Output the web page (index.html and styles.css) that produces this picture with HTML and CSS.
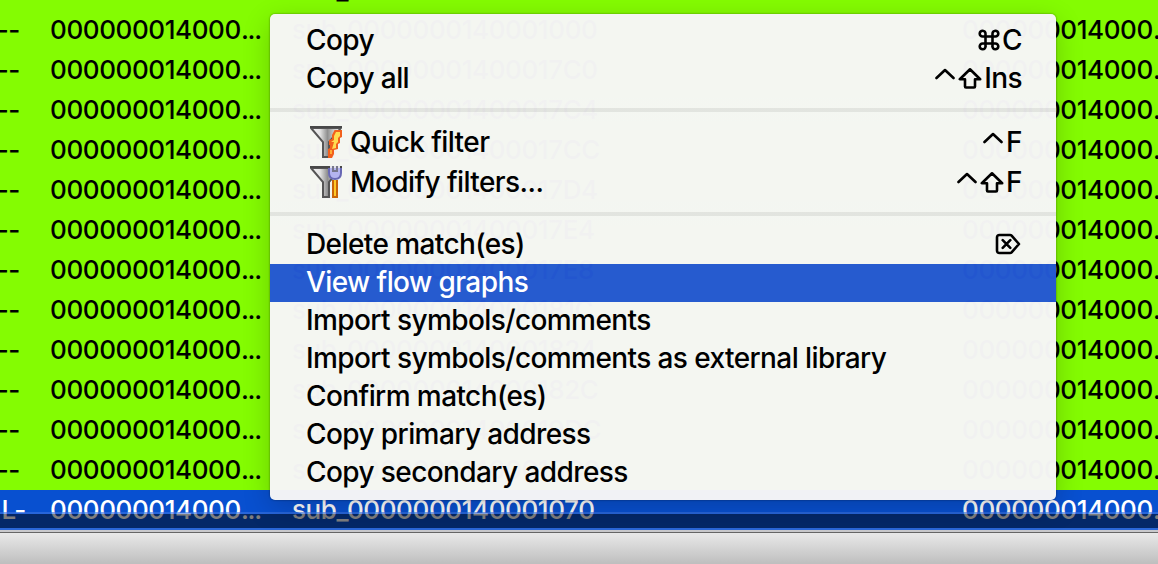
FILE: index.html
```html
<!DOCTYPE html>
<html lang="en">
<head>
<meta charset="utf-8">
<title>Matched functions</title>
<link rel="stylesheet" href="styles.css">
</head>
<body>
<svg class="defs" aria-hidden="true">
  <symbol id="ctrl" viewBox="0 0 20 22"><path d="M1.500 11 10 3l8.500 8"/></symbol>
  <symbol id="shift" viewBox="0 0 24 22"><path d="M12 2.300 1.800 12.200H7V19.500q0 1 1 1h8q1 0 1-1V12.200h5.200z"/></symbol>
  <symbol id="cmd" viewBox="0 0 22 22"><path d="M7.500 7.500h7v7h-7zM7.500 7.500V4.800A2.900 2.900 0 1 0 4.600 7.500zM14.500 7.500V4.800a2.900 2.900 0 1 1 2.900 2.700zM7.500 14.500v2.700a2.900 2.900 0 1 1-2.900-2.700zM14.500 14.500v2.700a2.900 2.900 0 1 0 2.900-2.700z"/></symbol>
  <symbol id="del" viewBox="0 0 26 22"><path d="M4.500 2H15q1 0 1.600.700L24 11l-7.400 8.300q-.600.700-1.600.700H4.500Q2 20 2 17.500v-13Q2 2 4.500 2zM7.700 7.200l7.600 7.600M15.300 7.200l-7.600 7.600"/></symbol>
  <linearGradient id="metal"><stop offset="0" stop-color="#f4f4f4"/><stop offset=".3" stop-color="#e4e4e4"/><stop offset=".55" stop-color="#909090"/><stop offset=".75" stop-color="#c8c8c8"/><stop offset="1" stop-color="#f0f0f0"/></linearGradient>
  <symbol id="funnel" viewBox="0 0 16 16"><path fill="url(#metal)" stroke="#555" d="M.500 1 6.500 8V15.500H9.500V8L15.500 1z"/><path fill="#484848" d="M0 0h16v1H0z"/></symbol>
</svg>
<main class="window">
  <div class="table">
    <div class="row"><span class="flags">--</span><span>000000014000<i>...</i></span><span>sub_0000000140001010</span><span>000000014000<i>...</i></span></div>
    <div class="row"><span class="flags">--</span><span>000000014000<i>...</i></span><span>sub_0000000140001000</span><span>000000014000<i>...</i></span></div>
    <div class="row"><span class="flags">--</span><span>000000014000<i>...</i></span><span>sub_00000001400017C0</span><span>000000014000<i>...</i></span></div>
    <div class="row"><span class="flags">--</span><span>000000014000<i>...</i></span><span>sub_00000001400017C4</span><span>000000014000<i>...</i></span></div>
    <div class="row"><span class="flags">--</span><span>000000014000<i>...</i></span><span>sub_00000001400017CC</span><span>000000014000<i>...</i></span></div>
    <div class="row"><span class="flags">--</span><span>000000014000<i>...</i></span><span>sub_00000001400017D4</span><span>000000014000<i>...</i></span></div>
    <div class="row"><span class="flags">--</span><span>000000014000<i>...</i></span><span>sub_00000001400017E4</span><span>000000014000<i>...</i></span></div>
    <div class="row"><span class="flags">--</span><span>000000014000<i>...</i></span><span>sub_00000001400017E8</span><span>000000014000<i>...</i></span></div>
    <div class="row"><span class="flags">--</span><span>000000014000<i>...</i></span><span>sub_000000014000181C</span><span>000000014000<i>...</i></span></div>
    <div class="row"><span class="flags">--</span><span>000000014000<i>...</i></span><span>sub_0000000140001824</span><span>000000014000<i>...</i></span></div>
    <div class="row"><span class="flags">--</span><span>000000014000<i>...</i></span><span>sub_000000014000182C</span><span>000000014000<i>...</i></span></div>
    <div class="row"><span class="flags">--</span><span>000000014000<i>...</i></span><span>sub_00000001400019DC</span><span>000000014000<i>...</i></span></div>
    <div class="row"><span class="flags">--</span><span>000000014000<i>...</i></span><span>sub_0000000140001BC0</span><span>000000014000<i>...</i></span></div>
    <div class="row selected"><span class="flags last">L-</span><span>000000014000<i>...</i></span><span>sub_0000000140001070</span><span>000000014000<i>...</i></span></div>
  </div>
  <div class="scrollbar"></div>
  <footer class="status"></footer>

  <nav class="menu">
    <div class="item"><span class="label">Copy</span><span class="keys"><svg class="cmd"><use href="#cmd"/></svg>C</span></div>
    <div class="item"><span class="label">Copy all</span><span class="keys"><svg class="ctrl"><use href="#ctrl"/></svg><svg class="shift"><use href="#shift"/></svg>Ins</span></div>
    <div class="sep"></div>
    <div class="item tall"><svg class="icon" viewBox="0 0 16 16"><use href="#funnel"/><path d="M12.300 2H16v3.500L15 6v2.500l-1 .500v2.500l-2 .500v2l-1 2H9v-4.500l1-.500V9.500H9.500V7l1.500-.500V4.500z" fill="#f2601c"/><path d="M13 3h2v2l-1 1v2l-1 1v2l-2 .500 1-3.500h-1.500L12 7V5z" fill="#ffdc50"/><path d="M10 12h1v2h-1z" fill="#ffac35"/></svg><span class="label">Quick filter</span><span class="keys"><svg class="ctrl"><use href="#ctrl"/></svg>F</span></div>
    <div class="item tall"><svg class="icon" viewBox="0 0 16 16"><use href="#funnel"/><path d="M10 0h5v3h-5z" fill="#e4e4ea"/><path d="M9.500 1v2.500Q9.500 6.500 12.500 6.500T15.500 3.500V1" fill="#b4b4f0" stroke="#6868b4"/><path d="M11 0h1v2h1V0h1v3h-3z" fill="#77778c"/><path d="M11 7h3v9h-3z" fill="#c96508"/><path d="M12 7h1v8h-1z" fill="#ffc928"/></svg><span class="label">Modify filters...</span><span class="keys"><svg class="ctrl"><use href="#ctrl"/></svg><svg class="shift"><use href="#shift"/></svg>F</span></div>
    <div class="sep"></div>
    <div class="item"><span class="label">Delete match(es)</span><span class="keys"><svg class="del"><use href="#del"/></svg></span></div>
    <div class="item active"><span class="label">View flow graphs</span></div>
    <div class="item"><span class="label">Import symbols/comments</span></div>
    <div class="item"><span class="label">Import symbols/comments as external library</span></div>
    <div class="item"><span class="label">Confirm match(es)</span></div>
    <div class="item"><span class="label">Copy primary address</span></div>
    <div class="item"><span class="label">Copy secondary address</span></div>
  </nav>
</main>
</body>
</html>
```
FILE: styles.css
```css
* { box-sizing: border-box; }
body { margin: 0; overflow: hidden; font-family: Inter, "Liberation Sans", sans-serif; color: #000; }
.defs { position: absolute; width: 0; height: 0; }
.window { position: relative; width: 1158px; height: 564px; overflow: hidden; display: flex; flex-direction: column; }
.table { height: 530px; display: flex; flex-direction: column; justify-content: flex-end; overflow: hidden; flex: none; }
.row {
  display: grid; grid-template-columns: 50px 242px 670px 220px; flex: none;
  height: 40px; line-height: 40px; width: 1182px;
  background: #84fc02; font-size: 26px; font-weight: 500; letter-spacing: -.4px; white-space: nowrap;
}
.row i { font-style: normal; letter-spacing: -1.2px; }
.flags { width: 20px; display: flex; justify-content: flex-end; }
.flags.last { width: 26px; }
.selected { background: #0850d0; color: #fff; }
.scrollbar {
  position: absolute; left: 0; top: 512px; width: 100%; height: 18px;
  background: rgba(0, 0, 0, .5);
  border-top: 2px solid rgba(60, 115, 225, .6); border-bottom: 2px solid #2a67d8;
  background-clip: padding-box;
}
.status {
  flex: 1; border-top: 2px solid #c9c9cc;
  background: linear-gradient(#666 0 1px, #e9e9e9 1px, #bebebe);
}
.menu {
  position: absolute; left: 270px; top: 14px; width: 786px; height: 486px;
  display: flex; flex-direction: column; border-radius: 5px; overflow: hidden;
  box-shadow: 0 0 2px rgba(0, 0, 0, .5), 0 8px 28px rgba(0, 0, 0, .2);
  font-size: 28px; font-weight: 500; letter-spacing: -.59px;
}
.menu::before, .menu::after { content: ""; height: 8px; }
.item, .menu::before, .menu::after { background: rgba(246, 246, 246, .98); flex: none; }
.item { height: 38px; padding: 0 34px 2px 36px; display: flex; align-items: center; white-space: nowrap; }
.item.tall { height: 40px; padding-bottom: 0; }
.item.active { background: rgba(36, 88, 211, .98); color: #fff; }
.sep {
  height: 24px; flex: none;
  background: linear-gradient(rgba(246, 246, 246, .98) 0 10px, rgba(228, 228, 228, .98) 10px 14px, rgba(246, 246, 246, .98) 14px);
}
.icon { width: 32px; height: 32px; margin: 0 8px 0 4px; }
.keys { margin-left: auto; display: flex; align-items: center; }
.keys svg { fill: none; stroke: #000; stroke-width: 2.6; stroke-linejoin: round; stroke-linecap: round; height: 22px; }
.ctrl { width: 20px; margin-right: 3px; }
.shift { width: 24px; margin-right: 2px; }
.cmd { width: 22px; margin-right: 2px; }
.keys .del { width: 26px; margin-right: 1px; }
```
